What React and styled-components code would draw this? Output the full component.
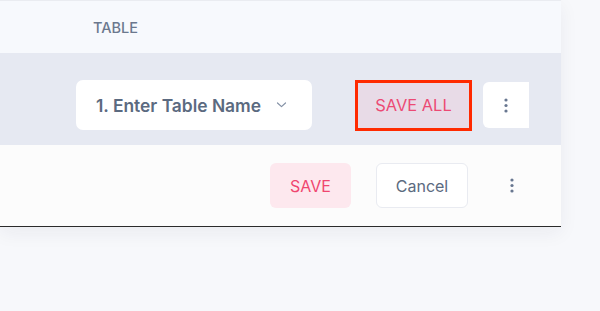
import React from "react";
import styled, { createGlobalStyle } from "styled-components";

const GlobalStyle = createGlobalStyle`
  html, body {
    margin: 0;
    padding: 0;
    background: #f7f8fb;
    font-family: Inter, "Noto Sans", sans-serif;
  }
`;

const Page = styled.div`
  width: 600px;
  height: 311px;
  overflow: hidden;
  background: #f7f8fb;
`;

const Panel = styled.div`
  width: 561px;
  background: #fcfcfc;
  border-bottom: 1.5px solid #2b2b2b;
  box-shadow: 0 6px 18px rgba(30, 40, 70, 0.06);
`;

const HeaderRow = styled.div`
  height: 52px;
  border-top: 1px solid #eaecf1;
  background: #f7f9fd;
  display: flex;
  align-items: center;
  padding-left: 93px;
`;

const HeaderCell = styled.span`
  font-size: 14.5px;
  font-weight: 500;
  color: #6b788e;
`;

const ToolRow = styled.div`
  height: 80px;
  padding-top: 12px;
  background: #e6e9f2;
  display: flex;
  align-items: center;
  padding-left: 76px;
`;

const Select = styled.div`
  width: 236px;
  height: 50px;
  box-sizing: border-box;
  background: #ffffff;
  border-radius: 7px;
  display: flex;
  align-items: center;
  padding: 0 25px 0 20px;
  justify-content: space-between;
  font-size: 17.4px;
  font-weight: 600;
  color: #5b6a80;
`;

const Button = styled.button`
  box-sizing: border-box;
  height: ${p => p.h || 45}px;
  width: ${p => p.w}px;
  margin-left: ${p => p.ml || 0}px;
  border-radius: 6px;
  border: ${p => p.outline ? `1px solid ${p.outline}` : "none"};
  background: ${p => p.bg};
  color: ${p => p.color};
  font-family: Inter, "Noto Sans", sans-serif;
  font-size: 16px;
  font-weight: 400;
  display: flex;
  align-items: center;
  justify-content: center;
  padding: 0;
  cursor: pointer;
`;

const Highlight = styled.div`
  margin-left: 43px;
  border: 3px solid #ff2a00;
  box-sizing: border-box;
  width: 117px;
  height: 51px;
  display: flex;
`;

const SaveAll = styled.button`
  flex: 1;
  border: none;
  background: #e8dbe7;
  color: #ec4a74;
  font-family: Inter, "Noto Sans", sans-serif;
  font-size: 16.4px;
  padding: 0;
  display: flex;
  align-items: center;
  justify-content: center;
`;

const MenuButton = styled.button`
  margin-left: 11px;
  width: 46px;
  height: 46px;
  border: none;
  background: #ffffff;
  border-radius: 6px 0 0 6px;
  display: flex;
  align-items: center;
  justify-content: center;
  padding: 0;
`;

const EditRow = styled.div`
  height: 81px;
  display: flex;
  align-items: center;
  justify-content: flex-end;
  padding-right: 29px;
`;

const Kebab = styled.div`
  width: 40px;
  margin-left: 24px;
  display: flex;
  justify-content: center;
`;

const Chevron = () => (
  <svg width="11" height="6" viewBox="0 0 11 6" fill="none">
    <path d="M1.5 1L5.5 4.6L9.5 1" stroke="#8491a6" strokeWidth="1.2" strokeLinecap="round" strokeLinejoin="round" />
  </svg>
);

const Dots = () => (
  <svg width="4" height="15" viewBox="0 0 4 15">
    <circle cx="2" cy="2" r="1.6" fill="#687790" />
    <circle cx="2" cy="7.5" r="1.6" fill="#687790" />
    <circle cx="2" cy="13" r="1.6" fill="#687790" />
  </svg>
);

export default function App() {
  return (
    <Page>
      <GlobalStyle />
      <Panel>
        <HeaderRow>
          <HeaderCell>TABLE</HeaderCell>
        </HeaderRow>
        <ToolRow>
          <Select>
            <span>1. Enter Table Name</span>
            <Chevron />
          </Select>
          <Highlight>
            <SaveAll>SAVE ALL</SaveAll>
          </Highlight>
          <MenuButton>
            <Dots />
          </MenuButton>
        </ToolRow>
        <EditRow>
          <Button w={81} bg="#fde8ee" color="#f0466f">SAVE</Button>
          <Button w={92} ml={25} bg="#ffffff" color="#5b6a80" outline="#e9ebf1">Cancel</Button>
          <Kebab>
            <Dots />
          </Kebab>
        </EditRow>
      </Panel>
    </Page>
  );
}
